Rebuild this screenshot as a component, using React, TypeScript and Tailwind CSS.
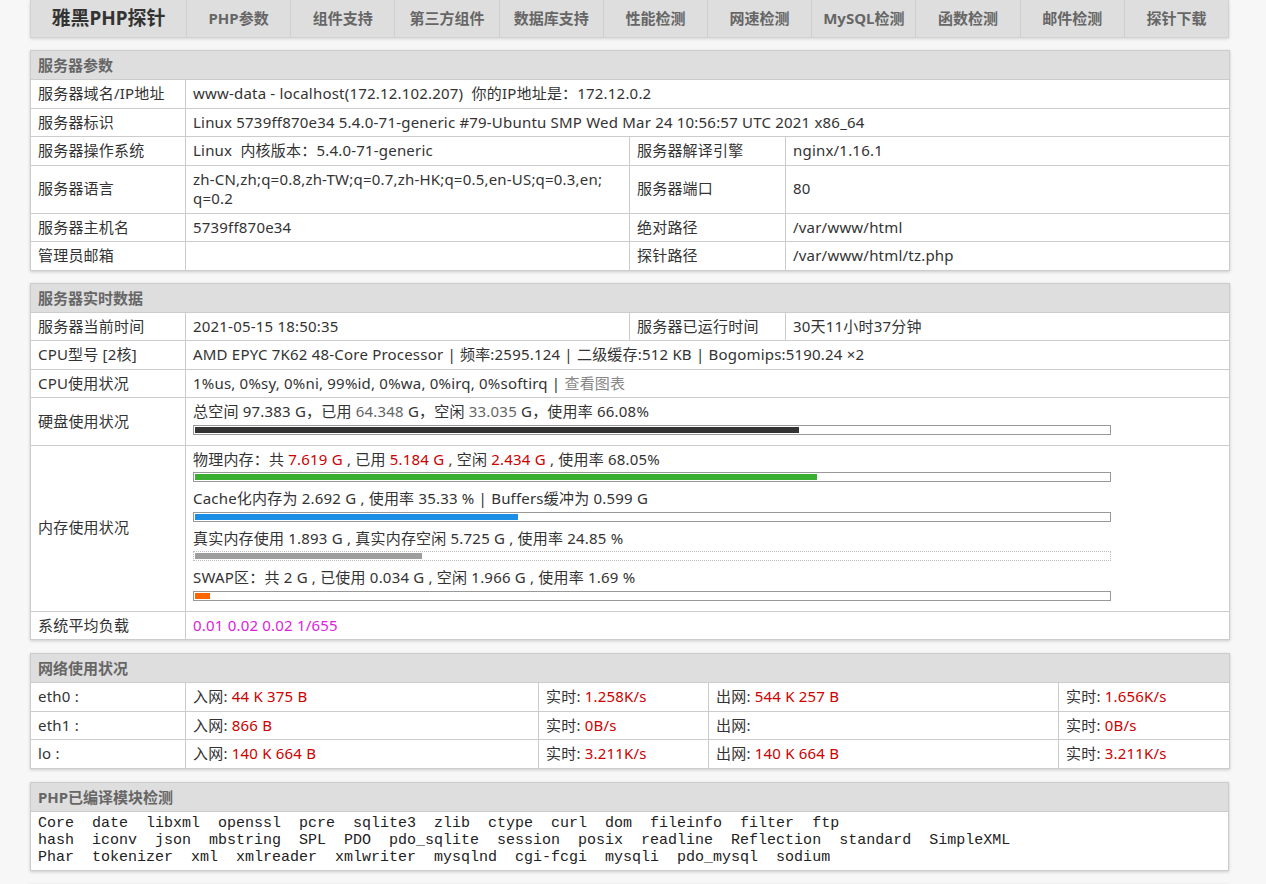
import React from "react";

const td = "border border-[#cccccc] px-[7px] py-[4px] leading-[19.5px] align-middle tracking-[0.2px]";
const th =
  "border border-[#cccccc] bg-[#dedede] text-left text-[#666666] font-bold px-[7px] py-[4px] leading-[20px]";
const tbl = "w-full table-fixed border-collapse bg-white shadow-[0_1px_3px_rgba(0,0,0,0.18)]";

function Cols4() {
  return (
    <colgroup>
      <col className="w-[155px]" />
      <col className="w-[444px]" />
      <col className="w-[156px]" />
      <col className="w-[444px]" />
    </colgroup>
  );
}

function Bar({ pct, color, dotted }: { pct: number; color: string; dotted?: boolean }) {
  return (
    <div
      className={
        "mt-[3px] mb-[7px] h-[10px] w-[918px] p-px box-border " +
        (dotted ? "border border-dotted border-[#bbbbbb]" : "border border-[#999999]")
      }
    >
      <div className={"h-[6px] " + color} style={{ width: pct + "%" }} />
    </div>
  );
}

const R = ({ children }: { children?: React.ReactNode }) => (
  <span className="text-[#cc0000]">{children}</span>
);

const navItems = [
  "PHP参数",
  "组件支持",
  "第三方组件",
  "数据库支持",
  "性能检测",
  "网速检测",
  "MySQL检测",
  "函数检测",
  "邮件检测",
  "探针下载",
];

const modules = [
  ["Core", "date", "libxml", "openssl", "pcre", "sqlite3", "zlib", "ctype", "curl", "dom", "fileinfo", "filter", "ftp"],
  ["hash", "iconv", "json", "mbstring", "SPL", "PDO", "pdo_sqlite", "session", "posix", "readline", "Reflection", "standard", "SimpleXML"],
  ["Phar", "tokenizer", "xml", "xmlreader", "xmlwriter", "mysqlnd", "cgi-fcgi", "mysqli", "pdo_mysql", "sodium"],
];

export default function App() {
  return (
    <div className="h-[884px] overflow-hidden bg-[#f7f7f7] text-[15px] text-[#333333] font-['Noto_Sans','Noto_Sans_CJK_SC',sans-serif]">
      <div className="ml-[30px] w-[1199px]">
        {/* nav */}
        <div className="flex h-[38px] bg-[#dedede] border-x border-b border-[#d2d2d2] shadow-[0_1px_3px_rgba(0,0,0,0.15)]">
          <div className="w-[155px] shrink-0 flex items-center justify-center pb-px text-[19px] font-bold text-[#333333]">
            雅黑PHP探针
          </div>
          {navItems.map((n) => (
            <div
              key={n}
              className="flex-1 flex items-center justify-center pb-px border-l border-[#cfcfcf] text-[15px] font-bold text-[#666666]"
            >
              {n}
            </div>
          ))}
        </div>

        {/* server params */}
        <table className={tbl + " mt-[12px]"}>
          <Cols4 />
          <tbody>
            <tr>
              <th colSpan={4} className={th}>服务器参数</th>
            </tr>
            <tr>
              <td className={td}>服务器域名/IP地址</td>
              <td className={td} colSpan={3}>
                www-data - localhost(172.12.102.207)&nbsp; 你的IP地址是：172.12.0.2
              </td>
            </tr>
            <tr>
              <td className={td}>服务器标识</td>
              <td className={td} colSpan={3}>
                Linux 5739ff870e34 5.4.0-71-generic #79-Ubuntu SMP Wed Mar 24 10:56:57 UTC 2021 x86_64
              </td>
            </tr>
            <tr>
              <td className={td}>服务器操作系统</td>
              <td className={td}>Linux&nbsp; 内核版本：5.4.0-71-generic</td>
              <td className={td}>服务器解译引擎</td>
              <td className={td}>nginx/1.16.1</td>
            </tr>
            <tr>
              <td className={td}>服务器语言</td>
              <td className={td}>
                zh-CN,zh;q=0.8,zh-TW;q=0.7,zh-HK;q=0.5,en-US;q=0.3,en;
                <br />
                q=0.2
              </td>
              <td className={td}>服务器端口</td>
              <td className={td}>80</td>
            </tr>
            <tr>
              <td className={td}>服务器主机名</td>
              <td className={td}>5739ff870e34</td>
              <td className={td}>绝对路径</td>
              <td className={td}>/var/www/html</td>
            </tr>
            <tr>
              <td className={td}>管理员邮箱</td>
              <td className={td}></td>
              <td className={td}>探针路径</td>
              <td className={td}>/var/www/html/tz.php</td>
            </tr>
          </tbody>
        </table>

        {/* realtime */}
        <table className={tbl + " mt-[12px]"}>
          <Cols4 />
          <tbody>
            <tr>
              <th colSpan={4} className={th}>服务器实时数据</th>
            </tr>
            <tr>
              <td className={td}>服务器当前时间</td>
              <td className={td}>2021-05-15 18:50:35</td>
              <td className={td}>服务器已运行时间</td>
              <td className={td}>30天11小时37分钟</td>
            </tr>
            <tr>
              <td className={td}>CPU型号 [2核]</td>
              <td className={td} colSpan={3}>
                AMD EPYC 7K62 48-Core Processor | 频率:2595.124 | 二级缓存:512 KB | Bogomips:5190.24 ×2
              </td>
            </tr>
            <tr>
              <td className={td}>CPU使用状况</td>
              <td className={td} colSpan={3}>
                1%us, 0%sy, 0%ni, 99%id, 0%wa, 0%irq, 0%softirq | <span className="text-[#888888]">查看图表</span>
              </td>
            </tr>
            <tr>
              <td className={td}>硬盘使用状况</td>
              <td className={td + " !pb-[3px]"} colSpan={3}>
                <div>
                  总空间 97.383 G，已用 <span className="text-[#666666]">64.348</span> G，空闲{" "}
                  <span className="text-[#666666]">33.035</span> G，使用率 66.08%
                </div>
                <Bar pct={66.08} color="bg-[#333333]" />
              </td>
            </tr>
            <tr>
              <td className={td}>内存使用状况</td>
              <td className={td + " !pb-[3px]"} colSpan={3}>
                <div>
                  物理内存：共 <R>7.619 G</R> , 已用 <R>5.184 G</R> , 空闲 <R>2.434 G</R> , 使用率 68.05%
                </div>
                <Bar pct={68.05} color="bg-[#3aae30]" />
                <div>Cache化内存为 2.692 G , 使用率 35.33 % | Buffers缓冲为 0.599 G</div>
                <Bar pct={35.33} color="bg-[#1b8fe6]" />
                <div>真实内存使用 1.893 G , 真实内存空闲 5.725 G , 使用率 24.85 %</div>
                <Bar pct={24.85} color="bg-[#9e9e9e]" dotted />
                <div>SWAP区：共 2 G , 已使用 0.034 G , 空闲 1.966 G , 使用率 1.69 %</div>
                <Bar pct={1.69} color="bg-[#ff6600]" />
              </td>
            </tr>
            <tr>
              <td className={td}>系统平均负载</td>
              <td className={td + " text-[#dd22dd]"} colSpan={3}>
                0.01 0.02 0.02 1/655
              </td>
            </tr>
          </tbody>
        </table>

        {/* network */}
        <table className={tbl + " mt-[13px]"}>
          <colgroup>
            <col className="w-[155px]" />
            <col className="w-[353px]" />
            <col className="w-[170px]" />
            <col className="w-[350px]" />
            <col className="w-[171px]" />
          </colgroup>
          <tbody>
            <tr>
              <th colSpan={5} className={th}>网络使用状况</th>
            </tr>
            <tr>
              <td className={td}>eth0 :</td>
              <td className={td}>入网: <R>44 K 375 B</R></td>
              <td className={td}>实时: <R>1.258K/s</R></td>
              <td className={td}>出网: <R>544 K 257 B</R></td>
              <td className={td}>实时: <R>1.656K/s</R></td>
            </tr>
            <tr>
              <td className={td}>eth1 :</td>
              <td className={td}>入网: <R>866 B</R></td>
              <td className={td}>实时: <R>0B/s</R></td>
              <td className={td}>出网: <R></R></td>
              <td className={td}>实时: <R>0B/s</R></td>
            </tr>
            <tr>
              <td className={td}>lo :</td>
              <td className={td}>入网: <R>140 K 664 B</R></td>
              <td className={td}>实时: <R>3.211K/s</R></td>
              <td className={td}>出网: <R>140 K 664 B</R></td>
              <td className={td}>实时: <R>3.211K/s</R></td>
            </tr>
          </tbody>
        </table>

        {/* modules */}
        <table className={tbl + " mt-[13px]"}>
          <tbody>
            <tr>
              <th className={th}>PHP已编译模块检测</th>
            </tr>
            <tr>
              <td className="border border-[#cccccc] px-[7px] py-[3.5px] font-['Liberation_Mono',monospace] text-[15px] leading-[17px] text-[#222222] whitespace-pre">
                {modules.map((line, i) => (
                  <div key={i}>{line.join("  ")}</div>
                ))}
              </td>
            </tr>
          </tbody>
        </table>

        {/* next table (cut off by the window) */}
        <table className={tbl + " mt-[13px]"}>
          <tbody>
            <tr>
              <th className={th}>&nbsp;</th>
            </tr>
          </tbody>
        </table>
      </div>
    </div>
  );
}
